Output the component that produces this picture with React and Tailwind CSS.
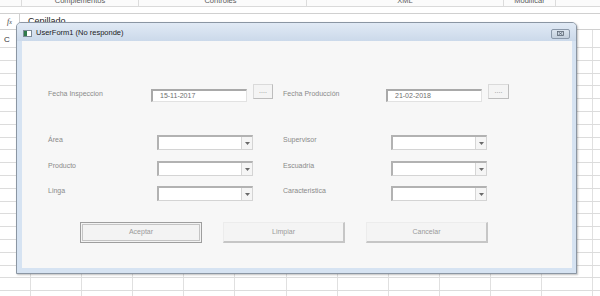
import React from 'react';

const COLS = [31, 51, 51, 51, 51, 52, 51, 51, 51, 51, 51, 51, 20];
const ROWS = Array.from({ length: 20 });

function DateField({ label, value, btnW }) {
  return (
    <>
      <div className="w-[103px] mt-[5px] leading-[10px] text-[7px] text-[#8a8a8a]">{label}</div>
      <div className="w-[96px] h-[13px] mt-[5px] bg-white border border-[#e2e2e2] border-t-[#a9a9a9] border-l-[#a9a9a9] border-t-2 border-l-2 flex items-center pl-[7px] text-[7px] text-[#6e6e6e]">
        {value}
      </div>
      <div
        className={`ml-[6px] h-[15px] bg-[#f4f4f4] border border-[#dadada] border-b-[#bdbdbd] border-r-[#bdbdbd] flex items-center justify-center text-[7px] text-[#8a8a8a] leading-none pb-[2px] ${btnW}`}
      >
        ....
      </div>
    </>
  );
}

function Combo({ w }) {
  return (
    <div className={`h-[15px] bg-white border border-[#d4d4d4] border-t-[#b2b2b2] border-l-[#b2b2b2] border-t-2 border-l-2 flex justify-end ${w}`}>
      <div className="w-[11px] h-full border-l border-[#d6d6d6] bg-[#f5f5f5] flex items-center justify-center">
        <svg width="5" height="3" viewBox="0 0 5 3">
          <path d="M0 0 L5 0 L2.5 3 Z" fill="#6a6a6a" />
        </svg>
      </div>
    </div>
  );
}

function ComboRow({ left, right, className }) {
  return (
    <div className={`flex items-start pl-[26px] h-[15px] ${className}`}>
      <div className="w-[109px] leading-[10px] text-[7px] text-[#8a8a8a]">{left}</div>
      <Combo w="w-[96px]" />
      <div className="w-[108px] ml-[30px] leading-[10px] text-[7px] text-[#8a8a8a]">{right}</div>
      <Combo w="w-[96px]" />
    </div>
  );
}

export default function App() {
  return (
    <div className="relative w-[600px] h-[296px] overflow-hidden bg-white font-['Liberation_Sans',Arial,sans-serif]">
      {/* ribbon group labels, cut off at the top like the capture */}
      <div className="h-[7px] border-b border-[#dadada] flex overflow-hidden text-[7.5px] text-[#5a5a5a] bg-[#fbfbfb]">
        <div className="w-[22px] border-r border-[#dcdcdc]" />
        <div className="w-[117px] border-r border-[#dcdcdc] flex justify-center leading-[10px] -mt-[4px]">Complementos</div>
        <div className="w-[168px] border-r border-[#dcdcdc] flex justify-center leading-[10px] -mt-[4px] pr-[4px]">Controles</div>
        <div className="w-[197px] border-r border-[#dcdcdc] flex justify-center leading-[10px] -mt-[4px]">XML</div>
        <div className="w-[52px] border-r border-[#dcdcdc] flex justify-center leading-[10px] -mt-[4px]">Modificar</div>
      </div>
      <div className="h-[6px]" />
      {/* formula bar */}
      <div className="h-[17px] border-t border-b border-[#d0d0d0] flex items-center">
        <div className="w-[20px] h-full border-r border-[#d0d0d0] flex items-center justify-center text-[#444] font-['Liberation_Serif',serif] italic">
          <span className="text-[8px]">f</span>
          <span className="text-[6px] mt-[2px]">x</span>
        </div>
        <div className="pl-[8px] text-[9px] text-[#222]">Cepillado</div>
      </div>
      {/* header row */}
      <div className="h-[18px] flex border-b border-[#dcdcdc]">
        {COLS.map((w, i) => (
          <div key={i} style={{ width: w }} className="h-full border-r border-[#e0e0e0] shrink-0 flex items-end pb-[1px] pl-[4px] text-[8px] text-[#333]">
            {i === 0 ? 'C' : ''}
          </div>
        ))}
      </div>
      {/* grid */}
      {ROWS.map((_, r) => (
        <div key={r} className="h-[12.8px] flex border-b border-[#dcdcdc]">
          {COLS.map((w, i) => (
            <div key={i} style={{ width: w }} className="h-full border-r border-[#e0e0e0] shrink-0" />
          ))}
        </div>
      ))}

      {/* window */}
      <div className="absolute left-[16px] top-[22px] w-[561px] h-[252px] border border-[#8b96a3] rounded-t-[5px] bg-[#d6e3f2] shadow-[1px_1px_2px_rgba(0,0,0,0.25)] flex flex-col">
        <div className="h-[18px] shrink-0 flex items-center pl-[6px] pr-[6px] rounded-t-[4px] bg-gradient-to-b from-[#e1eaf5] to-[#cbd9ea]">
          <div className="w-[9px] h-[7px] border border-[#7d8a96] bg-white flex mt-[2px]">
            <div className="w-[3px] h-full bg-[#2f7a4a]" />
          </div>
          <div className="ml-[4px] mt-[2px] text-[7.5px] text-[#1c1c1c]">UserForm1 (No responde)</div>
          <div className="ml-auto mt-[3px] w-[19px] h-[10px] rounded-[2px] border border-[#8a98a9] bg-gradient-to-b from-[#dbe4ee] to-[#c3cfdc] flex items-center justify-center">
            <svg width="7" height="5" viewBox="0 0 7 5">
              <rect x="0.5" y="0.5" width="6" height="4" fill="none" stroke="#5b6673" strokeWidth="0.8" />
              <path d="M1.5 1 L5.5 4 M5.5 1 L1.5 4" stroke="#5b6673" strokeWidth="0.8" />
            </svg>
          </div>
        </div>
        <div className="ml-[5px] mr-[4px] h-[227px] bg-[#f7f7f7] flex flex-col">
          <div className="flex items-start pl-[26px] mt-[43px] h-[18px]">
            <DateField label="Fecha Inspeccion" value="15-11-2017" btnW="w-[20px]" />
            <div className="w-[10px]" />
            <DateField label="Fecha Producción" value="21-02-2018" btnW="w-[21px]" />
          </div>
          <ComboRow left="Área" right="Supervisor" className="mt-[33px]" />
          <ComboRow left="Producto" right="Escuadria" className="mt-[11px]" />
          <ComboRow left="Linga" right="Caracteristica" className="mt-[10px]" />
          <div className="flex pl-[58px] mt-[21px] text-[7px] text-[#9a9a9a]">
            <div className="w-[122px] h-[21px] border border-[#9e9e9e] p-[1px] bg-[#f3f3f3]">
              <div className="w-full h-full border border-[#c4c4c4] flex items-center justify-center">Aceptar</div>
            </div>
            <div className="ml-[21px] w-[122px] h-[21px] border border-[#ececec] border-b-2 border-r-2 border-b-[#c6c6c6] border-r-[#c6c6c6] bg-[#f4f4f4] flex items-center justify-center">
              Limpiar
            </div>
            <div className="ml-[21px] w-[122px] h-[21px] border border-[#ececec] border-b-2 border-r-2 border-b-[#c6c6c6] border-r-[#c6c6c6] bg-[#f4f4f4] flex items-center justify-center">
              Cancelar
            </div>
          </div>
        </div>
      </div>
    </div>
  );
}
